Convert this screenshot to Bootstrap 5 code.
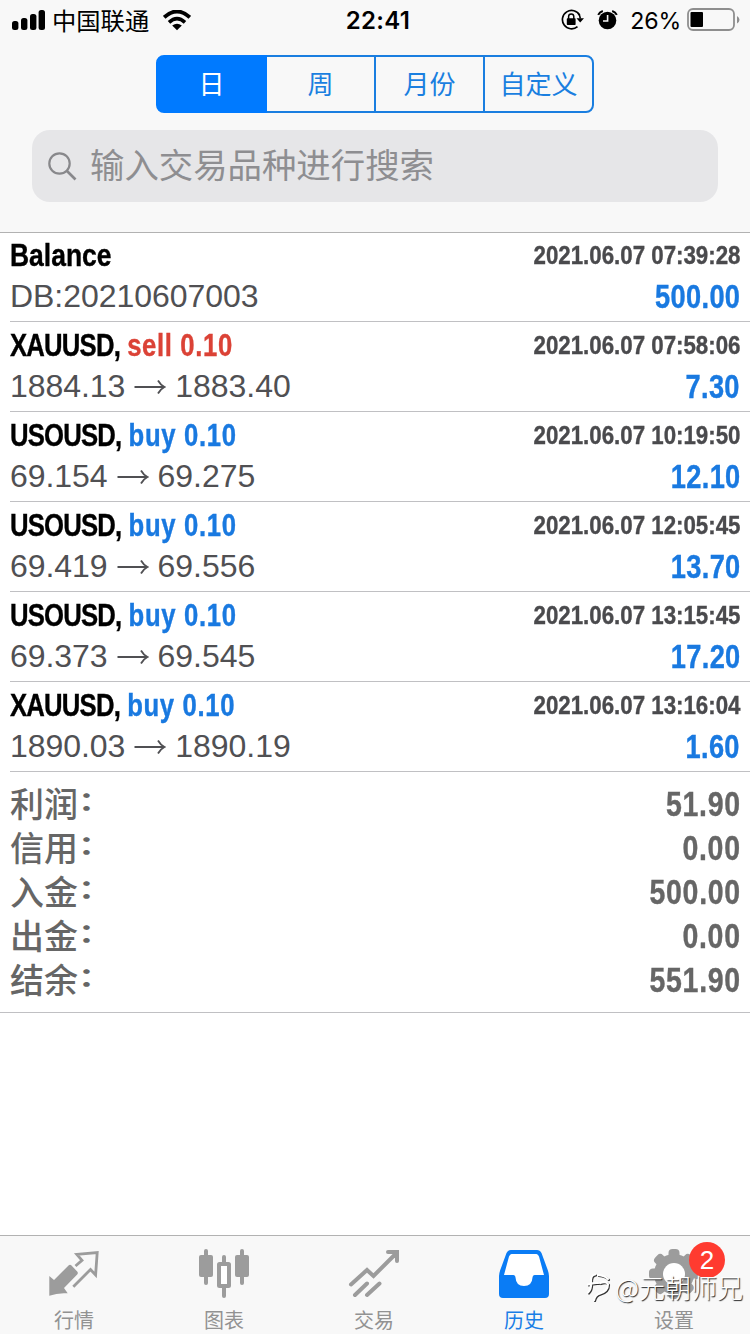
<!DOCTYPE html>
<html lang="zh-CN">
<head>
<meta charset="utf-8">
<meta name="viewport" content="width=device-width, initial-scale=1">
<title>历史</title>
<link href="https://cdn.jsdelivr.net/npm/bootstrap@5.3.0/dist/css/bootstrap.min.css" rel="stylesheet">
<style>
  body { font-family: "Liberation Sans", "Noto Sans CJK SC", sans-serif; background: #fff; height: 1334px; overflow: hidden; }
  svg { display: block; flex: none; }
  .cjk { font-family: "Noto Sans CJK SC", sans-serif; }
  .topbar { background: #f8f8f8; height: 233px; border-bottom: 1px solid #b2b2b2; }
  .status { height: 40px; font: 24px/40px Inter, "Noto Sans CJK SC", sans-serif; color: #000; padding: 0 12px; }
  .status > * { flex: 1 1 0; }
  .carrier { font: 24.3px/40px "Noto Sans CJK SC", sans-serif; margin: 0 14px 0 7px; }
  .clock { font-weight: 600; letter-spacing: .3px; padding-top: 2px; margin-left: 6px; }
  .charge { font-size: 23.2px; letter-spacing: -.2px; margin-left: 12px; padding-top: 2px; }
  .segments { width: 438px; height: 58px; margin-top: 15px; }
  .segments .btn { --bs-btn-color: #1a7fe0; --bs-btn-border-color: #1a7ee0; --bs-btn-border-width: 2px; --bs-btn-border-radius: 8px;
    --bs-btn-active-bg: #007aff; --bs-btn-active-border-color: #007aff; --bs-btn-active-color: #fff;
    flex: 1 1 0; padding: 0 0 3px; font: 26px/50px "Noto Sans CJK SC", sans-serif; }
  .segments.btn-group > .btn:not(:first-child) { margin-left: -2px; }
  .searchbox { height: 72px; margin: 17px 32px 0; padding-left: 16px; border-radius: 18px; background: #e6e6e8; color: #8e8e91; }
  .searchbox span { font: 34.4px/66px "Noto Sans CJK SC", sans-serif; margin: 0 0 7px 13px; }
  .deal { margin-left: 10px; padding: 3px 10px 0 0; height: 90px; border-bottom: 1px solid #c0c0c3; }
  .deal:first-child { height: 89px; padding-top: 2px; }
  .deal > div { height: 41px; line-height: 40px; }
  /* condensed bold: the regular bold face squeezed towards its own edge */
  .narrow { font-weight: 700; transform: scaleX(.825); transform-origin: right; white-space: nowrap; -webkit-text-stroke: .4px currentColor; }
  .symbol { font-size: 32px; color: #000; transform: scaleX(.803); transform-origin: left; }
  .symbol.label { transform: scaleX(.827); }
  .code { letter-spacing: -1px; }
  .sell, .buy { letter-spacing: .8px; }
  .sell { color: #db4236; }
  .buy, .profit { color: #1979e0; }
  .stamp { font-size: 26px; color: #4a4a4d; transform: scaleX(.857); }
  .price { font-size: 32px; color: #505053; gap: 9px; line-height: 41px; height: 41px; letter-spacing: -.05px; }
  .profit { font-size: 33px; letter-spacing: .4px; margin-right: -.2px; line-height: 42px; }
  .totals { height: 241px; padding: 10px 10px 0; border-bottom: 1px solid #c0c0c3; color: #666; }
  .totals > div { height: 44px; line-height: 44px; }
  .totals .cjk { font-size: 34px; font-weight: 500; line-height: 41px; }
  .totals i { display: inline-block; font-style: normal; font-weight: 700; transform: translate(0, -3px) scaleY(.75); }
  .totals .narrow { font-size: 34.5px; letter-spacing: .9px; margin-right: -.7px; line-height: 45px; }
  .tabs { height: 99px; border-top: 1px solid #b2b2b2; background: #f8f8f8; }
  .tabs a { flex: 1 1 0; padding: 12px 2px 0 0; color: #929292; text-decoration: none; font: 20px/28px "Noto Sans CJK SC", sans-serif; }
  .tabs a.current { color: #1a7ee6; }
  .tabs a span.name { margin-top: 6px; }
  .count { position: absolute; left: 89px; top: 6px; width: 36px; height: 36px; border-radius: 50%; background: #ff3b30; color: #fff; font: 26px/37px "Liberation Sans", sans-serif; text-align: center; }
  .signature { position: absolute; right: 7px; bottom: 25px; color: #fff; font: 300 26px/36px "Noto Sans CJK SC", sans-serif; text-shadow: 1px 1px 1px #222; }
  .signature span { margin-bottom: 4px; }
  .signature svg { filter: drop-shadow(1px 1px .4px #333); margin: 0 4px 3px 0; }
</style>
</head>
<body class="d-flex flex-column position-relative">

<header class="topbar flex-shrink-0">
  <div class="status d-flex align-items-center">
    <div class="d-flex align-items-center">
      <svg width="33" height="20" viewBox="0 0 33 20"><rect y="11" width="6.400" height="9" rx="2.500"/><rect x="9" y="8" width="6.400" height="12" rx="2.500"/><rect x="18" y="4" width="6.400" height="16" rx="2.500"/><rect x="26.600" width="6.400" height="20" rx="2.500"/></svg>
      <span class="carrier">中国联通</span>
      <svg width="28" height="21" viewBox="0 0 28 21" fill="none" stroke="#000"><path d="M1.200 7.300Q14-4.400 26.800 7.300" stroke-width="3.800"/><path d="M6 12.400Q14 5 22 12.400" stroke-width="3.600"/><path d="M9.200 15.500Q14 11.800 18.800 15.500L14 20.300Z" fill="#000" stroke="none"/></svg>
    </div>
    <div class="clock text-center">22:41</div>
    <div class="d-flex align-items-center justify-content-end">
      <svg width="23" height="22" viewBox="0 0 23 22"><path d="M18.700 6.200A9.200 9.200 0 1 0 16.500 17.700" fill="none" stroke="#000" stroke-width="1.700"/><path d="M19.300 9.500A9.200 9.200 0 0 0 17 4" fill="none" stroke="#000" stroke-width="1.700"/><path d="M15.500 9.200H23L19.200 13.500Z"/><rect x="5.800" y="9.300" width="8.800" height="6.600" rx=".7"/><path d="M7.600 10V7.500a2.600 2.600 0 0 1 5.200 0V10" fill="none" stroke="#000" stroke-width="1.500"/></svg>
      <svg style="margin-left:13px" width="21" height="20" viewBox="0 0 21 20"><circle cx="10.500" cy="10.500" r="8.800"/><path d="M1.200 4.800Q2.500 2 5.800 1M19.800 4.800Q18.500 2 15.200 1" fill="none" stroke="#000" stroke-width="2"/><path d="M10.600 5V11H6" fill="none" stroke="#f8f8f8" stroke-width="1.600"/></svg>
      <span class="charge">26%</span>
      <svg style="margin:0 -2px 0 6px" width="53" height="24" viewBox="0 0 53 24"><rect x="1" y="1" width="46" height="21" rx="5" fill="none" stroke="#8e8e8e" stroke-width="1.800"/><rect x="3.500" y="4" width="12.500" height="15" rx="1"/><path d="M50 8q2.500 1.500 2.500 3.700T50 15.500Z" fill="#8e8e8e"/></svg>
    </div>
  </div>
  <div class="segments btn-group d-flex mx-auto" role="group">
    <button class="btn btn-outline-primary active">日</button>
    <button class="btn btn-outline-primary">周</button>
    <button class="btn btn-outline-primary">月份</button>
    <button class="btn btn-outline-primary">自定义</button>
  </div>
  <div class="searchbox d-flex align-items-center">
    <svg width="29" height="29" viewBox="0 0 29 29" fill="none" stroke="#88888b" stroke-width="2.200"><circle cx="11.500" cy="11.500" r="10.200"/><path d="M19 19L27.500 27.500" stroke-width="2.700"/></svg>
    <span>输入交易品种进行搜索</span>
  </div>
</header>

<main class="flex-grow-1">
  <section id="deals">
    <article class="deal">
      <div class="d-flex justify-content-between"><span class="narrow symbol label">Balance</span><span class="narrow stamp">2021.06.07 07:39:28</span></div>
      <div class="d-flex justify-content-between"><span class="price">DB:20210607003</span><span class="narrow profit">500.00</span></div>
    </article>
  </section>
  <section class="totals">
    <div class="d-flex justify-content-between"><span class="cjk">利润<i>：</i></span><span class="narrow">51.90</span></div>
    <div class="d-flex justify-content-between"><span class="cjk">信用<i>：</i></span><span class="narrow">0.00</span></div>
    <div class="d-flex justify-content-between"><span class="cjk">入金<i>：</i></span><span class="narrow">500.00</span></div>
    <div class="d-flex justify-content-between"><span class="cjk">出金<i>：</i></span><span class="narrow">0.00</span></div>
    <div class="d-flex justify-content-between"><span class="cjk">结余<i>：</i></span><span class="narrow">551.90</span></div>
  </section>
</main>

<nav class="tabs d-flex flex-shrink-0">
  <a href="#" class="d-flex flex-column align-items-center">
    <svg width="52" height="52" viewBox="0 0 52 52"><path d="M1.300 28L6 32L20.500 17.500Q22 16.200 23.500 17.500L29.200 23.500Q30.500 25 29.200 26.500L16 40L19.700 45.300Q10 44.500 1.300 47.700Z" fill="#9c9c9c"/><path d="M25.300 38.700L42.500 21.500L47.600 27L49.200 4.500L28.800 6.300L34 12.300L27.500 18" fill="none" stroke="#9c9c9c" stroke-width="2.800"/></svg>
    <span class="name">行情</span>
  </a>
  <a href="#" class="d-flex flex-column align-items-center">
    <svg width="52" height="52" viewBox="0 0 52 52" fill="#9c9c9c"><rect x="6" y="1" width="4" height="36" rx="2"/><rect x="1" y="7" width="14" height="22" rx="2"/><rect x="42" y="1" width="4" height="36" rx="2"/><rect x="37" y="7" width="14" height="22" rx="2"/><rect x="24" y="7" width="4" height="10" rx="2"/><rect x="24" y="36" width="4" height="14" rx="2"/><rect x="21" y="16" width="10" height="22" rx=".5" fill="#fff" stroke="#9c9c9c" stroke-width="4"/></svg>
    <span class="name">图表</span>
  </a>
  <a href="#" class="d-flex flex-column align-items-center">
    <svg width="52" height="52" viewBox="0 0 52 52" fill="none" stroke="#9c9c9c" stroke-width="4" stroke-linecap="round"><path d="M3 36.500L19 22L25.500 28L48.500 5M40 4H49V13M7 47L19 35.500M19 47L31.500 35.500"/></svg>
    <span class="name">交易</span>
  </a>
  <a href="#" class="d-flex flex-column align-items-center current">
    <svg width="52" height="52" viewBox="0 0 52 52"><path d="M13 2H39Q42 2 43.500 5L49 20Q51 25 51 28V46Q51 50 47 50H5Q1 50 1 46V28Q1 25 3 20L8.500 5Q10 2 13 2Z" fill="#0a7cf5"/><path d="M13.500 6H38.500Q40 6 41 8.500L46 27H36.500Q34.500 27 34.500 29.500Q34 38 26 38Q18 38 17.500 29.500Q17.500 27 15.500 27H6L11 8.500Q12 6 13.500 6Z" fill="#fff"/></svg>
    <span class="name">历史</span>
  </a>
  <a href="#" class="d-flex flex-column align-items-center position-relative">
    <svg width="52" height="52" viewBox="-26 -26 52 52"><circle r="20" fill="#9c9c9c"/><g id="teeth" fill="#9c9c9c"></g><circle r="11" fill="#fff"/></svg>
    <span class="name">设置</span>
    <span class="count">2</span>
  </a>
</nav>

<div class="signature d-flex align-items-center">
  <svg width="25" height="31" viewBox="0 0 25 31" fill="none" stroke="#fff" stroke-width="2.200" stroke-linecap="round"><path d="M9 2.500Q4.500 3 5 10Q5.500 17 2 20.500M2 12.500Q8 10.500 12 11M12 3Q19 3.500 22 7M14 11Q20 9 22 12Q22 19 14 21.500Q9 23 8 28"/></svg>
  <span>@元朝师兄</span>
</div>

<script src="https://cdn.jsdelivr.net/npm/bootstrap@5.3.0/dist/js/bootstrap.bundle.min.js"></script>
<script>
  const deals = [
    ['XAUUSD', 'sell', '07:58:06', '1884.13', '1883.40', '7.30'],
    ['USOUSD', 'buy', '10:19:50', '69.154', '69.275', '12.10'],
    ['USOUSD', 'buy', '12:05:45', '69.419', '69.556', '13.70'],
    ['USOUSD', 'buy', '13:15:45', '69.373', '69.545', '17.20'],
    ['XAUUSD', 'buy', '13:16:04', '1890.03', '1890.19', '1.60']
  ];
  const arrow = '<svg width="32" height="16" viewBox="0 0 32 16" fill="none" stroke="#505053" stroke-width="1.800"><path d="M0.500 8H30M24 1.500Q26.500 6 30.500 8Q26.500 10 24 14.500"/></svg>';
  document.getElementById('deals').insertAdjacentHTML('beforeend', deals.map(([s, side, t, a, b, p]) => `
    <article class="deal">
      <div class="d-flex justify-content-between"><span class="narrow symbol"><span class="code">${s},</span> <span class="${side}">${side} 0.10</span></span><span class="narrow stamp">2021.06.07 ${t}</span></div>
      <div class="d-flex justify-content-between"><span class="price d-flex align-items-center"><span>${a}</span>${arrow}<span>${b}</span></span><span class="narrow profit">${p}</span></div>
    </article>`).join(''));
  // eight rounded gear teeth around the hub
  document.getElementById('teeth').innerHTML = Array.from({length: 8}, (_, i) =>
    `<rect x="-5.500" y="-25" width="11" height="12" rx="4" transform="rotate(${i * 45})"/>`).join('');
</script>
</body>
</html>
